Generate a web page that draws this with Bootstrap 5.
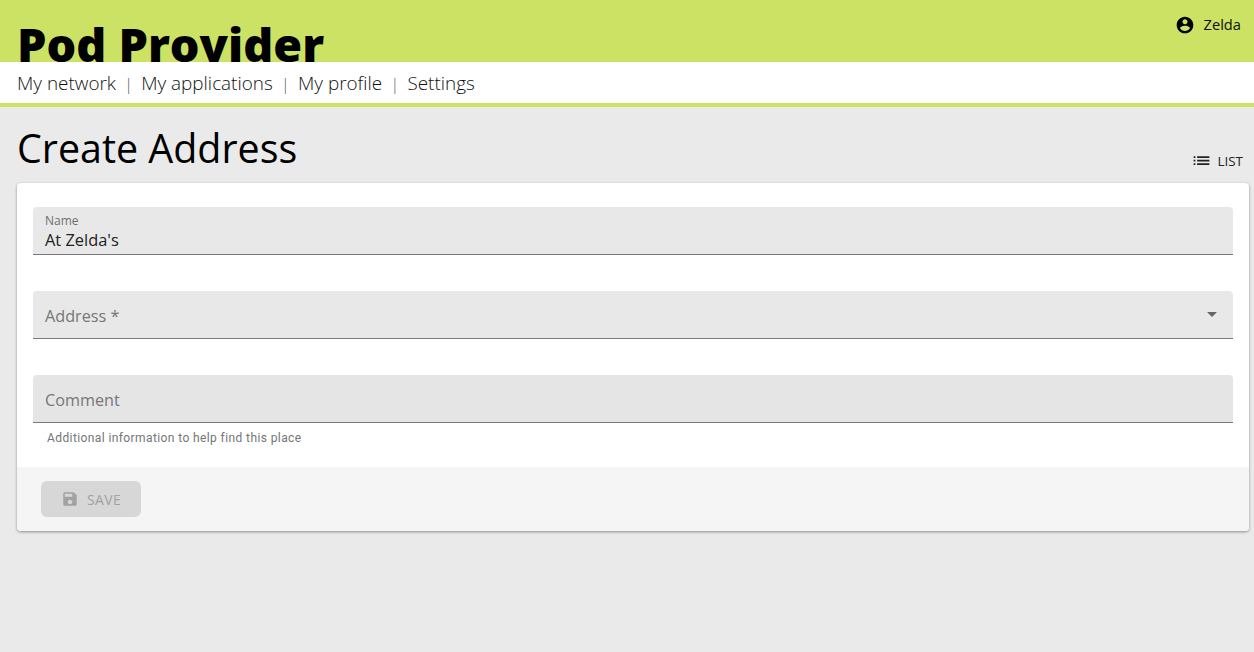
<!DOCTYPE html>
<html lang="en">
<head>
    <meta charset="UTF-8">
    <meta name="viewport" content="width=device-width, initial-scale=1.0">
    <title>Pod Provider</title>
    <link href="https://cdn.jsdelivr.net/npm/bootstrap@5.3.0/dist/css/bootstrap.min.css" rel="stylesheet">
    <style>
        body { background: #eaeaea; font-family: "Open Sans", sans-serif; color: #000; min-height: 652px; }
        .site-head { background: #cbe265; height: 62px; overflow: hidden; padding-left: 18px; }
        .site-title { font-size: 46.7px; font-weight: 800; line-height: 65px; margin: 12px 0 0 -1px; }
        .user-box { top: 14px; right: 13px; font-size: 14.7px; line-height: 21px; color: #111; }
        .site-nav { background: #fff; height: 45px; border-bottom: 4px solid #cbe265; padding: 0 0 0 17px; font-size: 18.9px; font-weight: 300; line-height: 42px; }
        .site-nav a { color: #111; text-decoration: none; }
        .site-nav .sep { color: #555; margin: 0 8.3px; font-size: 16px; }
        .page-top { height: 76px; padding: 14px 11px 0 17px; }
        .page-title { font-size: 39.4px; font-weight: 400; line-height: 54px; margin: 0; }
        .list-link { font-size: 13.4px; color: #222; line-height: 18px; margin-top: 29px; gap: 6px; }
        .form-card { margin: 0 5px 0 17px; height: 348px; background: #fff; border-radius: 4px; overflow: hidden; box-shadow: 0 1px 3px rgba(0,0,0,.4); }
        .form-body { padding: 24px 16px 0; height: 284px; }
        .fld { height: 48px; background: #e8e8e8; border-bottom: 1px solid #7a7a7a; border-radius: 4px 4px 0 0; padding: 0 12px; margin-bottom: 36px; }
        .fld-last { background: #e5e5e5; margin-bottom: 0; }
        .fld-small { font-size: 12px; line-height: 16px; color: #707070; padding-top: 6px; }
        .fld-value { font-size: 16.4px; line-height: 20px; color: #222; margin-top: 1px; }
        .fld-hold { font-size: 16.2px; line-height: 49px; color: #777; }
        .fld-hold-mid { position: relative; top: 2px; }
        .fld-hold-low { position: relative; top: 1px; }
        .fld-caret { width: 0; height: 0; border-left: 5px solid transparent; border-right: 5px solid transparent; border-top: 5px solid #666; margin-right: 4px; }
        .fld-help { font-family: Roboto, sans-serif; font-size: 12px; letter-spacing: .4px; line-height: 16px; color: #757575; margin: 7px 14px 0; }
        .form-foot { background: #f5f5f5; height: 64px; padding: 14px 24px; }
        .save-btn { width: 100px; height: 36px; background: #d7d7d7; border: 0; border-radius: 6px; color: #a2a2a2; font-size: 14px; letter-spacing: .4px; padding: 0 0 0 20px; gap: 8px; }
    </style>
</head>
<body>
<header class="site-head position-relative">
    <h1 class="site-title">Pod Provider</h1>
    <div class="user-box position-absolute d-flex align-items-center gap-2">
        <svg width="20" height="20" viewBox="0 0 24 24" fill="#000"><path d="M12 2C6.48 2 2 6.48 2 12s4.48 10 10 10 10-4.48 10-10S17.52 2 12 2zm0 3c1.66 0 3 1.34 3 3s-1.34 3-3 3-3-1.34-3-3 1.34-3 3-3zm0 14.2c-2.5 0-4.71-1.28-6-3.22.03-1.99 4-3.08 6-3.08 1.99 0 5.97 1.09 6 3.08-1.29 1.94-3.5 3.22-6 3.22z"/></svg>
        <span>Zelda</span>
    </div>
</header>
<nav class="site-nav">
    <a href="#">My network</a><span class="sep">|</span><a href="#">My applications</a><span class="sep">|</span><a href="#">My profile</a><span class="sep">|</span><a href="#">Settings</a>
</nav>
<div class="page-top d-flex justify-content-between align-items-start">
    <h2 class="page-title">Create Address</h2>
    <div class="list-link d-flex align-items-center">
        <svg width="21" height="21" viewBox="0 0 24 24" fill="#222"><path d="M3 13h2v-2H3v2zm0 4h2v-2H3v2zm0-8h2V7H3v2zm4 4h14v-2H7v2zm0 4h14v-2H7v2zM7 7v2h14V7H7z"/></svg>
        <span>LIST</span>
    </div>
</div>
<main class="form-card">
    <div class="form-body">
        <div class="fld">
            <div class="fld-small">Name</div>
            <div class="fld-value">At Zelda's</div>
        </div>
        <div class="fld d-flex justify-content-between align-items-center">
            <span class="fld-hold fld-hold-mid">Address *</span>
            <span class="fld-caret"></span>
        </div>
        <div class="fld fld-last">
            <span class="fld-hold fld-hold-low">Comment</span>
        </div>
        <div class="fld-help">Additional information to help find this place</div>
    </div>
    <div class="form-foot">
        <button type="button" class="save-btn d-flex align-items-center" disabled>
            <svg width="18" height="18" viewBox="0 0 24 24" fill="#a2a2a2"><path d="M17 3H5c-1.11 0-2 .9-2 2v14c0 1.1.89 2 2 2h14c1.1 0 2-.9 2-2V7l-4-4zm-5 16c-1.66 0-3-1.34-3-3s1.34-3 3-3 3 1.34 3 3-1.34 3-3 3zm3-10H5V5h10v4z"/></svg>
            <span>SAVE</span>
        </button>
    </div>
</main>
<script src="https://cdn.jsdelivr.net/npm/bootstrap@5.3.0/dist/js/bootstrap.bundle.min.js"></script>
</body>
</html>
